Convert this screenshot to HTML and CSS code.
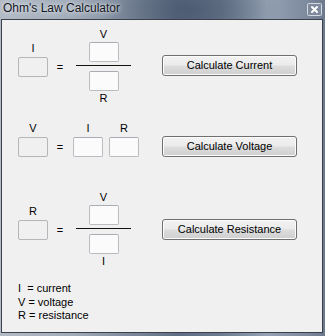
FILE: index.html
```html
<!DOCTYPE html>
<html>
<head>
<meta charset="utf-8">
<title>Ohm's Law Calculator</title>
<link rel="stylesheet" href="styles.css">
</head>
<body>
<div class="window">
  <div class="titlebar">
    <span class="title">Ohm's Law Calculator</span>
    <span class="close">
      <svg width="15" height="13" viewBox="0 0 15 13">
        <rect x="0.5" y="0.5" width="14" height="12" rx="1" fill="#7f8b9c" stroke="#d3d9e1"/>
        <path d="M5 4 L10 9 M10 4 L5 9" stroke="#ffffff" stroke-width="2" stroke-linecap="round"/>
      </svg>
    </span>
  </div>
  <div class="client">
    <div class="row row-frac">
      <div class="lhs"><div class="lbl">I</div><div class="box disabled"></div></div>
      <div class="eq">=</div>
      <div class="frac">
        <div class="lbl">V</div>
        <div class="box"></div>
        <div class="bar"></div>
        <div class="box"></div>
        <div class="lbl lbl-bottom">R</div>
      </div>
      <button class="btn btn-up">Calculate Current</button>
    </div>

    <div class="row row-prod">
      <div class="lhs-plain"><div class="lbl">V</div><div class="box disabled"></div></div>
      <div class="eq">=</div>
      <div class="term term-i"><div class="lbl">I</div><div class="box"></div></div>
      <div class="term term-r"><div class="lbl">R</div><div class="box"></div></div>
      <button class="btn btn-prod">Calculate Voltage</button>
    </div>

    <div class="row row-frac row-third">
      <div class="lhs"><div class="lbl">R</div><div class="box disabled"></div></div>
      <div class="eq">=</div>
      <div class="frac">
        <div class="lbl">V</div>
        <div class="box"></div>
        <div class="bar"></div>
        <div class="box"></div>
        <div class="lbl lbl-bottom">I</div>
      </div>
      <button class="btn">Calculate Resistance</button>
    </div>

    <div class="legend">
      <div>I&nbsp; = current</div>
      <div>V = voltage</div>
      <div>R = resistance</div>
    </div>
  </div>
</div>
</body>
</html>
```
FILE: styles.css
```css
html, body {
  margin: 0;
  padding: 0;
  background: #8390a3;
}

.window {
  width: 325px;
  height: 336px;
  box-sizing: border-box;
  padding: 0 2px 3px 1px;
  display: flex;
  flex-direction: column;
  background:
    radial-gradient(ellipse 90px 40px at 190px 10px, rgba(60, 75, 98, 0.55), rgba(60, 75, 98, 0) 100%),
    linear-gradient(90deg, #b3bbc6 0%, #a2acb9 22%, #7d899b 40%, #5f6e84 55%, #6d7b90 68%, #95a2b4 82%, #7e8b9f 94%, #6c798c 100%);
  font-family: "Liberation Sans", Arial, sans-serif;
}

.titlebar {
  height: 19px;
  flex: 0 0 19px;
  display: flex;
  align-items: flex-start;
  justify-content: space-between;
}

.title {
  font-size: 12px;
  line-height: 14px;
  margin: 1px 0 0 2px;
  color: #15181d;
  text-shadow: 0 0 6px rgba(235, 240, 246, 0.9), 0 0 3px rgba(235, 240, 246, 0.8);
}

.close {
  display: block;
  width: 15px;
  height: 13px;
  margin: 3px 1px 0 0;
}

.close svg {
  display: block;
}

.client {
  flex: 1;
  box-sizing: border-box;
  border: 1px solid #3b414b;
  background: #f0f0f0;
  padding: 8px 0 0 16px;
  font-size: 11px;
  color: #000;
}

.row {
  display: flex;
}

.row-frac {
  align-items: center;
}

.lbl {
  height: 13px;
  line-height: 13px;
  text-align: center;
}

.box {
  width: 30px;
  height: 20px;
  box-sizing: border-box;
  border: 1px solid #b9bcc1;
  border-top-color: #a9acb2;
  border-radius: 2px;
  background: #fbfbfb;
}

.box.disabled {
  background: #f0f0f0;
  border-color: #b4b6b9;
}

.lhs {
  width: 30px;
  display: flex;
  flex-direction: column;
  padding-bottom: 15px;
}

.lhs .lbl {
  margin-bottom: 2px;
}

.eq {
  width: 24px;
  height: 20px;
  line-height: 20px;
  text-align: center;
}

.frac {
  width: 55px;
  margin-left: 4px;
  display: flex;
  flex-direction: column;
  align-items: center;
}

.frac .lbl {
  width: 100%;
}

.frac .box + .bar {
  margin-top: 3px;
}

.frac > .lbl:first-child {
  margin-bottom: 1px;
}

.bar {
  width: 55px;
  height: 1px;
  background: #111;
  margin-bottom: 5px;
}

.lbl-bottom {
  margin-top: 1px;
}

.btn {
  width: 135px;
  height: 21px;
  margin-left: 31px;
  padding: 0;
  box-sizing: border-box;
  border: 1px solid #707070;
  border-radius: 3px;
  background: linear-gradient(#f2f2f2 0%, #ebebeb 48%, #dddddd 52%, #cfcfcf 100%);
  box-shadow: inset 0 0 0 1px #fcfcfc;
  font-family: "Liberation Sans", Arial, sans-serif;
  font-size: 11px;
  color: #000;
  line-height: 19px;
}

.btn-up {
  margin-bottom: 3px;
}

.row-prod {
  align-items: flex-end;
  margin-top: 17px;
}

.lhs-plain,
.term {
  display: flex;
  flex-direction: column;
  width: 30px;
}

.lhs-plain .lbl,
.term .lbl {
  margin-bottom: 2px;
}

.term-i {
  margin-left: 1px;
}

.term-r {
  margin-left: 6px;
}

.btn-prod {
  margin-left: 23px;
}

.row-third {
  margin-top: 34px;
}

.legend {
  margin-top: 14px;
  line-height: 13.5px;
}
```
